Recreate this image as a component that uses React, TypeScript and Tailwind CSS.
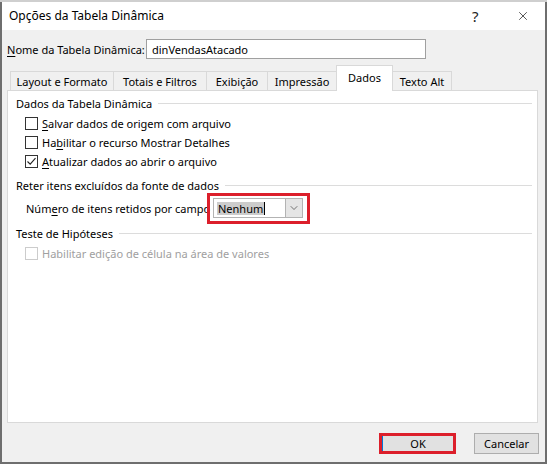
import { X, ChevronDown } from "lucide-react";

const tabs = [
  { label: "Layout e Formato", width: "w-[104px]" },
  { label: "Totais e Filtros", width: "w-[94px]" },
  { label: "Exibição", width: "w-[62px]" },
  { label: "Impressão", width: "w-[70px]" },
  { label: "Dados", width: "w-[57px]", active: true },
  { label: "Texto Alt", width: "w-[60px]" },
];

function Checkbox({ checked = false, disabled = false }: { checked?: boolean; disabled?: boolean }) {
  return (
    <span
      className={
        "w-[13px] h-[13px] border bg-white flex items-center justify-center shrink-0 " +
        (disabled ? "border-[#cccccc]" : "border-[#333333]")
      }
    >
      {checked && (
        <svg width="11" height="11" viewBox="0 0 11 11">
          <polyline points="1.5,5.5 4.2,8.2 9.5,2.2" fill="none" stroke="#222" strokeWidth="1.1" />
        </svg>
      )}
    </span>
  );
}

// section title with the etched line running to the right edge
function GroupHeading({ children }: { children: React.ReactNode }) {
  return (
    <div className="h-[16px] flex items-center gap-[6px]">
      <span className="whitespace-nowrap">{children}</span>
      <span className="flex-1 h-px bg-[#dcdcdc]" />
    </div>
  );
}

function CheckRow({
  checked,
  disabled,
  children,
}: {
  checked?: boolean;
  disabled?: boolean;
  children: React.ReactNode;
}) {
  return (
    <div className="h-[19px] flex items-center gap-[4px] ml-[9px]">
      <Checkbox checked={checked} disabled={disabled} />
      <span className={"whitespace-nowrap " + (disabled ? "text-[#a0a0a0]" : "text-black")}>{children}</span>
    </div>
  );
}

export default function App() {
  return (
    <div className="w-[547px] h-[464px] flex flex-col bg-[#d6d6d6] text-[11px] leading-none text-black font-['Segoe_UI','Noto_Sans',sans-serif]">
      <div className="h-[3px] bg-[#cfcfcf]" />
      <div className="flex-1 flex flex-col bg-[#f0f0f0] border-x-2 border-b-2 border-[#6e6e6e]">
        {/* Title bar */}
        <div className="h-[28px] bg-white flex items-center pl-[7px]">
          <span className="flex-1 text-[12px]">Opções da Tabela Dinâmica</span>
          <span className="text-[15px] w-[10px] mr-[34px] text-[#222]">?</span>
          <X className="w-[14px] h-[14px] mr-[15px] text-[#222]" strokeWidth={1.3} />
        </div>

        <div className="flex-1 flex flex-col pl-[5px] pr-[7px] pb-[8px]">
          {/* Pivot table name */}
          <div className="flex items-center mt-[9px] h-[20px]">
            <span className="w-[139px] whitespace-nowrap">
              <span className="underline underline-offset-2">N</span>ome da Tabela Dinâmica:
            </span>
            <div className="w-[280px] h-[20px] bg-white border border-[#a0a0a0] flex items-center pl-[5px]">
              dinVendasAtacado
            </div>
          </div>

          {/* Tabs */}
          <div className="flex items-end h-[26px] mt-[6px] ml-[3px] -mb-px relative z-10">
            {tabs.map((tab, i) =>
              tab.active ? (
                <div
                  key={tab.label}
                  className={`${tab.width} h-[26px] bg-white border border-b-0 border-[#d9d9d9] flex items-center justify-center pb-[3px] -ml-px relative z-10`}
                >
                  {tab.label}
                </div>
              ) : (
                <div
                  key={tab.label}
                  className={`${tab.width} h-[20px] bg-[#f0f0f0] border border-[#d9d9d9] flex items-center justify-center whitespace-nowrap ${i > 0 ? "-ml-px" : ""}`}
                >
                  {tab.label}
                </div>
              )
            )}
          </div>

          {/* Dados tab page */}
          <div className="h-[333px] bg-white border border-[#d9d9d9] pt-[4px] pl-[8px] pr-[5px]">
            <GroupHeading>Dados da Tabela Dinâmica</GroupHeading>
            <div className="mt-[3px]">
              <CheckRow>
                <span className="underline underline-offset-2">S</span>alvar dados de origem com arquivo
              </CheckRow>
              <CheckRow>
                Ha<span className="underline underline-offset-2">b</span>ilitar o recurso Mostrar Detalhes
              </CheckRow>
              <CheckRow checked>
                <span className="underline underline-offset-2">A</span>tualizar dados ao abrir o arquivo
              </CheckRow>
            </div>

            <div className="mt-[6px]">
              <GroupHeading>Reter itens excluídos da fonte de dados</GroupHeading>
            </div>
            <div className="h-[31px] flex items-center ml-[10px]">
              <span className="w-[181px] whitespace-nowrap">
                Núm<span className="underline underline-offset-2">e</span>ro de itens retidos por campo
              </span>
              <div className="w-[103px] h-[31px] border-[3px] border-[#dc1f2b] pl-[3px] pt-[2px]">
                <div className="w-[90px] h-[20px] border border-[#b3b3b3] bg-white flex">
                  <div className="flex-1 flex items-center pl-[3px]">
                    <span className="bg-[#cccccc] px-px h-[13px] flex items-center">Nenhum</span>
                    <span className="w-px h-[13px] bg-black" />
                  </div>
                  <div className="w-[17px] bg-[#e5e5e5] border-l border-[#b3b3b3] flex items-center justify-center">
                    <ChevronDown className="w-[12px] h-[12px] text-[#333]" strokeWidth={1.3} />
                  </div>
                </div>
              </div>
            </div>

            <div className="mt-px">
              <GroupHeading>Teste de Hipóteses</GroupHeading>
            </div>
            <div className="mt-[3px]">
              <CheckRow disabled>Habilitar edição de célula na área de valores</CheckRow>
            </div>
          </div>

          {/* Dialog buttons */}
          <div className="flex justify-end items-center mt-[10px] gap-[18px]">
            <div className="w-[77px] h-[21px] border-[3px] border-[#dc1f2b]">
              <div className="w-full h-full bg-[#e1e1e1] border-l border-[#0078d7] flex items-center justify-center">
                OK
              </div>
            </div>
            <div className="w-[65px] h-[21px] bg-[#e1e1e1] border border-[#adadad] flex items-center justify-center -mr-px">
              Cancelar
            </div>
          </div>
        </div>
      </div>
    </div>
  );
}
